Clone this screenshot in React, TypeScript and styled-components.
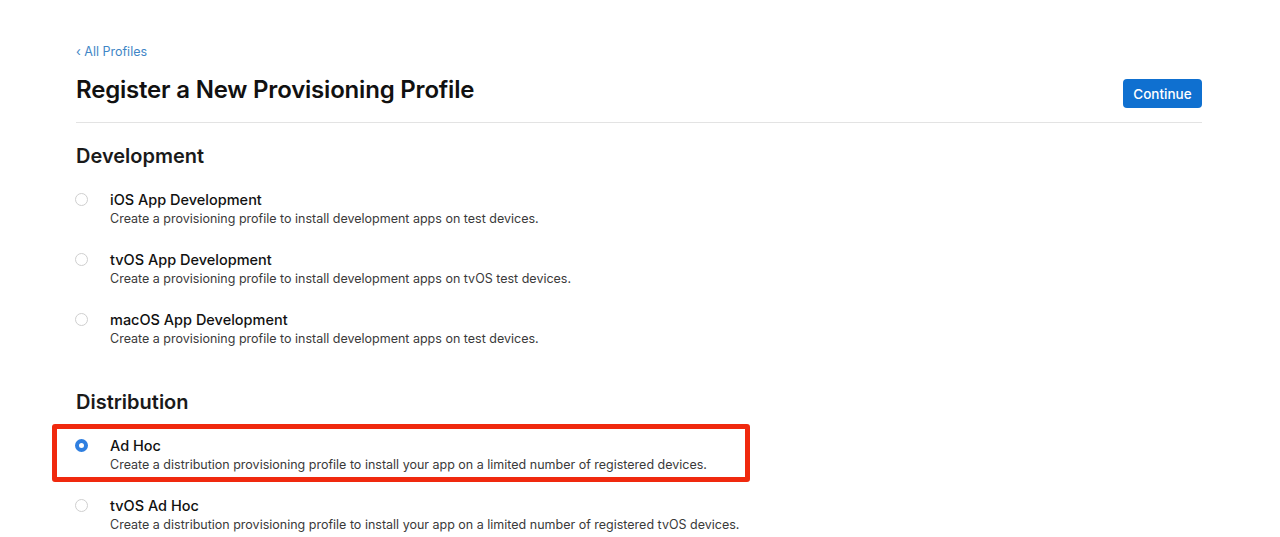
import React from "react";
import styled, { createGlobalStyle } from "styled-components";

const GlobalStyle = createGlobalStyle`
  body {
    margin: 0;
    background: #ffffff;
    font-family: Inter, "Noto Sans", "Liberation Sans", sans-serif;
    color: #1d1d1f;
  }
`;

type Option = {
  name: string;
  description: string;
  selected?: boolean;
  highlighted?: boolean;
};

const development: Option[] = [
  {
    name: "iOS App Development",
    description: "Create a provisioning profile to install development apps on test devices.",
  },
  {
    name: "tvOS App Development",
    description: "Create a provisioning profile to install development apps on tvOS test devices.",
  },
  {
    name: "macOS App Development",
    description: "Create a provisioning profile to install development apps on test devices.",
  },
];

const distribution: Option[] = [
  {
    name: "Ad Hoc",
    description:
      "Create a distribution provisioning profile to install your app on a limited number of registered devices.",
    selected: true,
    highlighted: true,
  },
  {
    name: "tvOS Ad Hoc",
    description:
      "Create a distribution provisioning profile to install your app on a limited number of registered tvOS devices.",
  },
];

const App = () => {
  return (
    <>
      <GlobalStyle />
      <Page>
        <BackLink href="#">‹ All Profiles</BackLink>
        <Header>
          <Title>Register a New Provisioning Profile</Title>
          <ContinueButton>Continue</ContinueButton>
        </Header>
        <Divider />
        <Section>
          <SectionTitle>Development</SectionTitle>
          <OptionList>
            {development.map((o) => (
              <OptionRow key={o.name} option={o} />
            ))}
          </OptionList>
        </Section>
        <Section $spaced>
          <SectionTitle>Distribution</SectionTitle>
          <OptionList>
            {distribution.map((o) => (
              <OptionRow key={o.name} option={o} />
            ))}
          </OptionList>
        </Section>
      </Page>
    </>
  );
};

const OptionRow = ({ option }: { option: Option }) => (
  <Row $highlighted={option.highlighted}>
    <Radio $selected={option.selected} />
    <OptionText>
      <OptionName>{option.name}</OptionName>
      <OptionDesc>{option.description}</OptionDesc>
    </OptionText>
  </Row>
);

export default App;

const Page = styled.div`
  width: 1126px;
  margin-left: 76px;
  padding-top: 43px;
`;

const BackLink = styled.a`
  display: block;
  font-size: 12.5px;
  color: #3f86c6;
  text-decoration: none;
  line-height: 18px;
`;

const Header = styled.div`
  display: flex;
  justify-content: space-between;
  align-items: flex-start;
  margin-top: 12px;
`;

const Title = styled.h1`
  margin: 0;
  font-size: 24px;
  font-weight: 600;
  letter-spacing: -0.2px;
  color: #111;
  line-height: 34px;
`;

const ContinueButton = styled.button`
  width: 79px;
  height: 29px;
  margin-top: 6px;
  border: none;
  border-radius: 4px;
  background: #0f70d0;
  color: #fff;
  font-family: inherit;
  font-size: 13.5px;
  font-weight: 500;
`;

const Divider = styled.div`
  height: 1px;
  background: #e3e3e3;
  margin-top: 14px;
`;

const Section = styled.section<{ $spaced?: boolean }>`
  margin-top: ${(p) => (p.$spaced ? "33px" : "20px")};
`;

const SectionTitle = styled.h2`
  margin: 0;
  font-size: 20px;
  font-weight: 600;
  color: #1a1a1a;
  line-height: 26px;
`;

const OptionList = styled.div`
  display: flex;
  flex-direction: column;
  gap: 2px;
  margin-top: 9px;
`;

const Row = styled.div<{ $highlighted?: boolean }>`
  box-sizing: border-box;
  display: flex;
  align-items: flex-start;
  gap: 22px;
  width: 698px;
  margin-left: -24px;
  padding: 7px 0 3px 18px;
  border: 5px solid ${(p) => (p.$highlighted ? "#f0290e" : "transparent")};
  border-radius: 3px;
`;

const Radio = styled.span<{ $selected?: boolean }>`
  flex: none;
  box-sizing: border-box;
  width: 13px;
  height: 13px;
  margin-top: 3px;
  border-radius: 50%;
  border: ${(p) => (p.$selected ? "4px solid #2f7fe0" : "1px solid #cfcfcf")};
  background: #fff;
`;

const OptionText = styled.div`
  display: flex;
  flex-direction: column;
`;

const OptionName = styled.div`
  font-size: 14.5px;
  font-weight: 500;
  color: #111;
  line-height: 19px;
`;

const OptionDesc = styled.div`
  font-size: 12.5px;
  color: #3a3a3a;
  line-height: 19px;
  white-space: nowrap;
`;
